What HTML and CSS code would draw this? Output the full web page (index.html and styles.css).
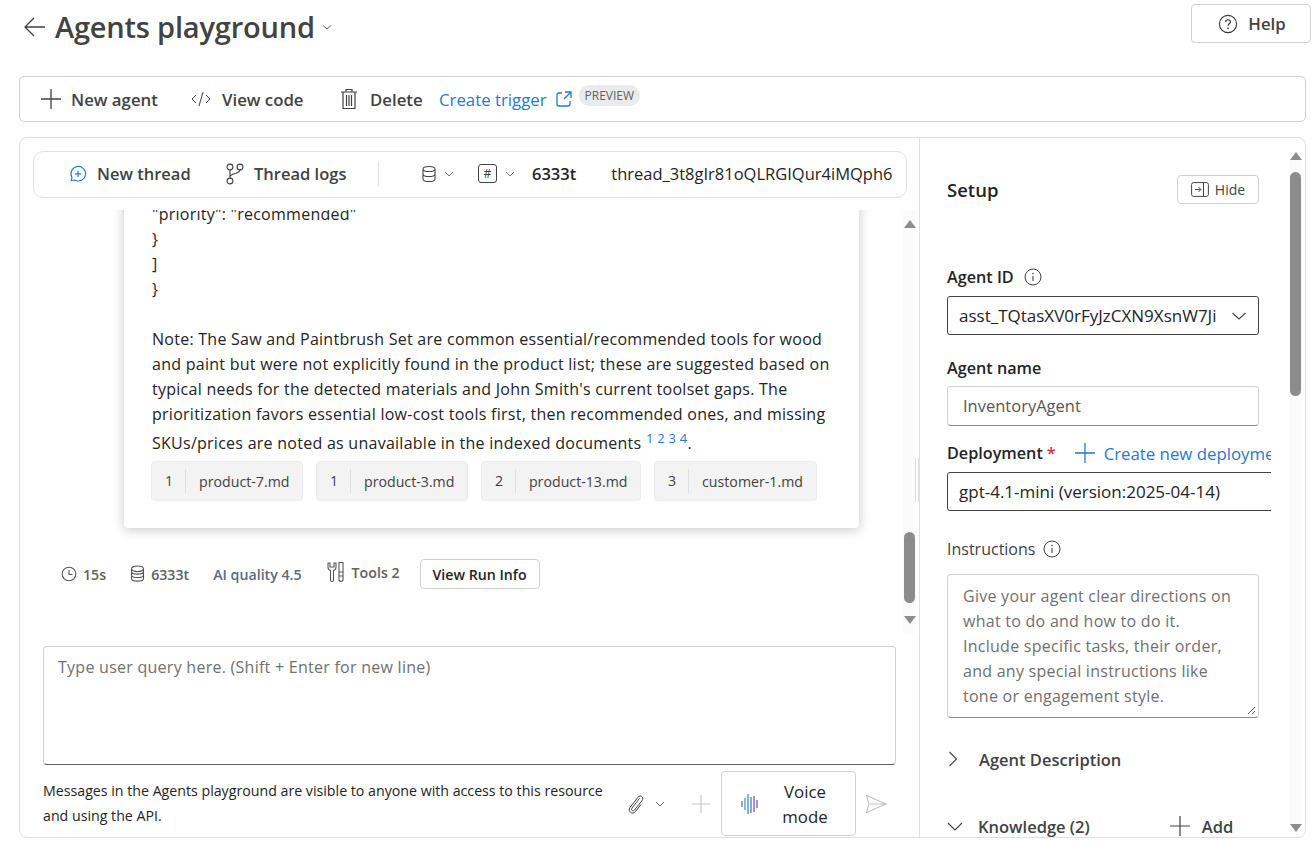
FILE: index.html
```html
<!DOCTYPE html>
<html lang="en">
<head>
    <meta charset="UTF-8">
    <meta name="viewport" content="width=device-width, initial-scale=1.0">
    <title>Agents playground</title>
    <link rel="stylesheet" href="styles.css">
</head>
<body>
    <!-- Page title -->
    <header class="page-head">
        <div class="title-group">
            <svg class="back-icon" width="24" height="24" viewBox="0 0 24 24"><path d="M12 3 L3 12 L12 21 M3 12 H23" fill="none" stroke="#424242" stroke-width="1.3"/></svg>
            <h1 class="page-title">Agents playground</h1>
            <svg class="title-chev" width="12" height="12" viewBox="0 0 12 12"><path d="M2 4.5 L6 8 L10 4.5" fill="none" stroke="#666" stroke-width="1"/></svg>
        </div>
        <button class="help-btn">
            <svg width="20" height="20" viewBox="0 0 20 20"><circle cx="10" cy="10" r="8.6" fill="none" stroke="#333" stroke-width="1.1"/><path d="M7.6 8 C7.6 4.9 12.4 4.9 12.4 8 C12.4 9.8 10 9.8 10 11.8" fill="none" stroke="#333" stroke-width="1.1"/><circle cx="10" cy="14.4" r=".8" fill="#333"/></svg>
            Help
        </button>
    </header>

    <!-- Toolbar -->
    <nav class="toolbar">
        <span class="tool tool-new">
            <svg width="22" height="22" viewBox="0 0 22 22"><path d="M11 1 V21 M1 11 H21" stroke="#424242" stroke-width="1.3"/></svg>
            New agent
        </span>
        <span class="tool tool-code">
            <svg width="20" height="16" viewBox="0 0 20 16"><path d="M5 4 L1 8 L5 12 M15 4 L19 8 L15 12 M12 1 L8 15" fill="none" stroke="#424242" stroke-width="1"/></svg>
            View code
        </span>
        <span class="tool tool-delete">
            <svg width="18" height="22" viewBox="0 0 18 22"><path d="M1 4 H17 M6 4 V1.5 H12 V4 M3 4 V20.5 H15 V4 M6.5 7 V18 M9 7 V18 M11.5 7 V18" fill="none" stroke="#424242" stroke-width="1.2"/></svg>
            Delete
        </span>
        <a class="trigger-link">Create trigger</a>
        <svg class="trigger-icon" width="16" height="16" viewBox="0 0 16 16"><path d="M6 2 H3 Q1 2 1 4 V13 Q1 15 3 15 H12 Q14 15 14 13 V10 M9 1 H15 V7 M15 1 L8 8" fill="none" stroke="#1f7ad1" stroke-width="1.3"/></svg>
        <span class="preview-tag">PREVIEW</span>
    </nav>

    <main class="workspace">
        <!-- Chat side -->
        <section class="chat-pane">
            <div class="thread-bar">
                <span class="thread-tool thread-new">
                    <svg width="18" height="18" viewBox="0 0 18 18"><path d="M2.2 15.6 L3 12.4 A7.3 7.3 0 1 1 5.6 15 Z" fill="none" stroke="#1f7ad1" stroke-width="1.1"/><path d="M9 5.8 V12 M5.9 8.9 H12.1" stroke="#1f7ad1" stroke-width="1.1"/></svg>
                    New thread
                </span>
                <span class="thread-tool thread-logs">
                    <svg width="20" height="22" viewBox="0 0 20 22"><circle cx="5" cy="4" r="2.9" fill="none" stroke="#424242" stroke-width="1.1"/><circle cx="15" cy="4" r="2.9" fill="none" stroke="#424242" stroke-width="1.1"/><circle cx="5" cy="18" r="2.9" fill="none" stroke="#424242" stroke-width="1.1"/><path d="M5 7 V15 M15 7 C15 11 5 10 5 14" fill="none" stroke="#424242" stroke-width="1.1"/></svg>
                    Thread logs
                </span>
                <span class="bar-divider"></span>
                <svg class="db-icon" width="14" height="18" viewBox="0 0 14 18"><path d="M1 4 C1 .6 13 .6 13 4 V14 C13 17.4 1 17.4 1 14 Z M1 4 C1 7.4 13 7.4 13 4 M1 9 C1 12.4 13 12.4 13 9" fill="none" stroke="#424242" stroke-width="1.1"/></svg>
                <svg class="bar-chev" width="10" height="10" viewBox="0 0 10 10"><path d="M1 3 L5 7 L9 3" fill="none" stroke="#777" stroke-width="1"/></svg>
                <span class="hash-box">#</span>
                <svg class="bar-chev" width="10" height="10" viewBox="0 0 10 10"><path d="M1 3 L5 7 L9 3" fill="none" stroke="#777" stroke-width="1"/></svg>
                <span class="token-count">6333t</span>
                <span class="thread-id">thread_3t8gIr81oQLRGIQur4iMQph6</span>
            </div>

            <div class="chat-body">
                <div class="chat-scroll">
                    <article class="answer-card">
                        <p class="answer-text">"priority": "recommended"<br>}<br>]<br>}<br><br>Note: The Saw and Paintbrush Set are common essential/recommended tools for wood<br>and paint but were not explicitly found in the product list; these are suggested based on<br>typical needs for the detected materials and John Smith's current toolset gaps. The<br>prioritization favors essential low-cost tools first, then recommended ones, and missing</p>
                        <p class="answer-last">SKUs/prices are noted as unavailable in the indexed documents <sup class="refs">1 2 3 4</sup>.</p>
                        <div class="chips">
                            <span class="chip"><b class="chip-num">1</b>product-7.md</span>
                            <span class="chip"><b class="chip-num">1</b>product-3.md</span>
                            <span class="chip"><b class="chip-num">2</b>product-13.md</span>
                            <span class="chip"><b class="chip-num">3</b>customer-1.md</span>
                        </div>
                    </article>
                    <div class="run-stats">
                        <span class="stat">
                            <svg width="16" height="16" viewBox="0 0 16 16"><circle cx="8" cy="8" r="6.8" fill="none" stroke="#555" stroke-width="1.1"/><path d="M8 4 V8.5 H11.5" fill="none" stroke="#555" stroke-width="1.1"/></svg>
                            15s
                        </span>
                        <span class="stat">
                            <svg width="15" height="18" viewBox="0 0 15 18"><ellipse cx="7.5" cy="3.8" rx="6" ry="2.8" fill="none" stroke="#555" stroke-width="1.1"/><path d="M1.5 4 V6.5 C1.5 10 13.5 10 13.5 6.5 V4 M1.5 7 V10 C1.5 13.4 13.5 13.4 13.5 10 V7 M1.5 10.5 V13.5 C1.5 17 13.5 17 13.5 13.5 V10.5" fill="none" stroke="#555" stroke-width="1.1"/></svg>
                            6333t
                        </span>
                        <span class="stat stat-quality">AI quality 4.5</span>
                        <span class="stat stat-tools">
                            <svg width="20" height="22" viewBox="0 0 20 22"><path d="M2 2 V6 C2 8 3 9 4.5 9.5 V19 C4.5 21 7.5 21 7.5 19 V9.5 C9 9 10 8 10 6 V2 L8 2 V6 H4 V2 Z" fill="none" stroke="#555" stroke-width="1.1"/><path d="M13 1.5 H17 V11 H13 Z M13 11 V18.5 C13 21 17 21 17 18.5 V11 M13 15 H17" fill="none" stroke="#555" stroke-width="1.1"/></svg>
                            Tools 2
                        </span>
                        <button class="run-info">View Run Info</button>
                    </div>
                </div>
                <div class="fake-scroll chat-track">
                    <span class="arrow-up"></span>
                    <span class="track-fill"><span class="thumb chat-thumb"></span></span>
                    <span class="arrow-down"></span>
                </div>
            </div>

            <div class="query-box">Type user query here. (Shift + Enter for new line)</div>

            <div class="chat-foot">
                <p class="foot-note">Messages in the Agents playground are visible to anyone with access to this resource<br>and using the API.</p>
                <svg class="clip-icon" width="18" height="22" viewBox="0 0 18 20"><path d="M12.5 4.5 L5 14 C3.6 16 6 18 7.6 16 L15 6.5 C17.4 3.4 13.4 .2 11 3.2 L3 13.5 C.4 17 5 21.500 8.500 17.500 L14 10.500" fill="none" stroke="#424242" stroke-width="1"/></svg>
                <svg class="clip-chev" width="10" height="10" viewBox="0 0 10 10"><path d="M1 3 L5 7 L9 3" fill="none" stroke="#666" stroke-width="1"/></svg>
                <svg class="foot-plus" width="20" height="20" viewBox="0 0 20 20"><path d="M10 1 V19 M1 10 H19" stroke="#c8c8c8" stroke-width="1.2"/></svg>
                <button class="voice-btn">
                    <svg width="18" height="26" viewBox="0 0 18 26"><path d="M1 10 V16" stroke="#5b7fd0" stroke-width="1.4"/><path d="M4 7 V19" stroke="#5b9fc0" stroke-width="1.4"/><path d="M7 3 V23" stroke="#3fa6a0" stroke-width="1.4"/><path d="M10 6 V22" stroke="#5b7fd0" stroke-width="1.4"/><path d="M13 5 V21" stroke="#7a62d8" stroke-width="1.4"/><path d="M16 9 V17" stroke="#8e5ad8" stroke-width="1.4"/></svg>
                    <span class="voice-label">Voice<br>mode</span>
                </button>
                <svg class="send-icon" width="22" height="20" viewBox="0 0 22 20"><path d="M1.5 1.5 L21 10 L1.5 18.5 L4 10 Z M4 10 H21" fill="none" stroke="#c4c4c4" stroke-width="1.1"/></svg>
            </div>
        </section>

        <div class="splitter"><span class="grip"></span></div>

        <!-- Setup side -->
        <aside class="setup-pane">
            <div class="setup-clip">
                <div class="setup-head">
                    <h2 class="setup-title">Setup</h2>
                    <button class="hide-btn">
                        <svg width="18" height="15" viewBox="0 0 18 15"><rect x=".6" y=".6" width="16.8" height="13.8" rx="2" fill="none" stroke="#424242"/><path d="M12.5 1 V14 M4 7.5 H9.5 M7.5 5 L10 7.5 L7.5 10" fill="none" stroke="#424242"/></svg>
                        Hide
                    </button>
                </div>

                <label class="field-label label-id">Agent ID
                    <svg width="18" height="18" viewBox="0 0 18 18"><circle cx="9" cy="9" r="8" fill="none" stroke="#424242" stroke-width="1"/><path d="M9 8 V13" stroke="#424242" stroke-width="1.1"/><circle cx="9" cy="5.6" r=".8" fill="#424242"/></svg>
                </label>
                <div class="select-box box-id">
                    <span>asst_TQtasXV0rFyJzCXN9XsnW7Ji</span>
                    <svg width="16" height="10" viewBox="0 0 16 10"><path d="M1.5 2 L8 8 L14.5 2" fill="none" stroke="#424242" stroke-width="1.1"/></svg>
                </div>

                <label class="field-label label-name">Agent name</label>
                <div class="text-box">InventoryAgent</div>

                <div class="deploy-row">
                    <label class="field-label">Deployment <span class="req">*</span></label>
                    <svg class="deploy-plus" width="20" height="20" viewBox="0 0 20 20"><path d="M10 0 V20 M0 10 H20" stroke="#1f7ad1" stroke-width="1.3"/></svg>
                    <a class="deploy-link">Create new deployment</a>
                </div>
                <div class="select-box box-deploy"><span>gpt-4.1-mini (version:2025-04-14)</span></div>

                <label class="instr-label">Instructions
                    <svg width="18" height="18" viewBox="0 0 18 18"><circle cx="9" cy="9" r="8" fill="none" stroke="#424242" stroke-width="1"/><path d="M9 8 V13" stroke="#424242" stroke-width="1.1"/><circle cx="9" cy="5.6" r=".8" fill="#424242"/></svg>
                </label>
                <div class="instr-box">Give your agent clear directions on<br>what to do and how to do it.<br>Include specific tasks, their order,<br>and any special instructions like<br>tone or engagement style.
                    <svg class="resize-mark" width="9" height="9" viewBox="0 0 9 9"><path d="M1 8 L8 1 M5 8 L8 5" stroke="#555" stroke-width="1"/></svg>
                </div>

                <div class="section-row row-desc">
                    <svg width="12" height="16" viewBox="0 0 12 16"><path d="M2.5 1 L9.5 8 L2.5 15" fill="none" stroke="#424242" stroke-width="1.1"/></svg>
                    Agent Description
                </div>
                <div class="section-row row-know">
                    <svg width="16" height="12" viewBox="0 0 16 12"><path d="M1 3 L8 10 L15 3" fill="none" stroke="#424242" stroke-width="1.1"/></svg>
                    Knowledge (2)
                    <span class="add-knowledge">
                        <svg width="22" height="22" viewBox="0 0 22 22"><path d="M11 1 V21 M1 11 H21" stroke="#424242" stroke-width="1.2"/></svg>
                        Add
                    </span>
                </div>
            </div>
            <div class="fake-scroll setup-track">
                <span class="arrow-up"></span>
                <span class="track-fill"><span class="thumb setup-thumb"></span></span>
                <span class="arrow-down"></span>
            </div>
        </aside>
    </main>
</body>
</html>
```

FILE: styles.css
```css
* {
    box-sizing: border-box;
}

body {
    font-family: 'Open Sans', 'Noto Sans', sans-serif;
    margin: 0;
    width: 1316px;
    height: 842px;
    overflow: hidden;
    background-color: #fff;
    color: #242424;
    font-size: 15px;
}

button {
    font-family: inherit;
    background-color: #fff;
    cursor: pointer;
}

/* Page title */
.page-head {
    display: flex;
    justify-content: space-between;
    height: 76px;
    padding: 4px 5px 0 22px;
}

.title-group {
    display: flex;
    align-items: center;
    height: 45px;
    gap: 9px;
}

.title-chev {
    margin-left: -3px;
}

.page-title {
    margin: 0;
    font-size: 29px;
    font-weight: 600;
    color: #424242;
    letter-spacing: -0.2px;
}

.help-btn {
    display: flex;
    align-items: center;
    justify-content: center;
    gap: 10px;
    width: 120px;
    height: 39px;
    padding: 0 0 0 2px;
    border: 1px solid #d1d1d1;
    border-radius: 4px;
    font-size: 16.8px;
    font-weight: 600;
    color: #424242;
}

/* Toolbar */
.toolbar {
    display: flex;
    align-items: center;
    height: 46px;
    margin: 0 10px 15px 19px;
    padding-left: 20px;
    border: 1px solid #d1d1d1;
    border-radius: 5px;
    font-size: 16.8px;
    font-weight: 600;
    color: #424242;
}

.tool {
    display: flex;
    align-items: center;
}

.tool-new {
    gap: 9px;
    width: 151px;
}

.tool-code {
    gap: 11px;
    width: 149px;
}

.tool-delete {
    gap: 12px;
    width: 99px;
}

.trigger-link {
    font-weight: 400;
    color: #1f7ad1;
}

.trigger-icon {
    margin-left: 9px;
}

.preview-tag {
    margin: -7px 0 0 7px;
    padding: 2px 6px;
    border-radius: 10px;
    background-color: #ebebeb;
    font-size: 12px;
    font-weight: 500;
    color: #616161;
}

/* Main area */
.workspace {
    display: flex;
    height: 701px;
    margin: 0 10px 0 19px;
    border: 1px solid #e0e0e0;
    border-radius: 8px;
}

.chat-pane {
    display: flex;
    flex-direction: column;
    width: 897px;
    padding-top: 13px;
}

.thread-bar {
    display: flex;
    align-items: center;
    flex-shrink: 0;
    width: 874px;
    height: 47px;
    margin-left: 13px;
    padding: 0 0 2px 35px;
    border: 1px solid #e0e0e0;
    border-radius: 10px;
    font-size: 16.5px;
    font-weight: 600;
    color: #424242;
}

.thread-tool {
    display: flex;
    align-items: center;
}

.thread-new {
    gap: 10px;
    width: 156px;
}

.thread-logs {
    gap: 9px;
    width: 153px;
}

.bar-divider {
    width: 1px;
    height: 25px;
    margin-right: 43px;
    background-color: #e0e0e0;
}

.bar-chev {
    margin-left: 8px;
}

.hash-box {
    display: flex;
    align-items: center;
    justify-content: center;
    width: 19px;
    height: 19px;
    margin-left: 24px;
    border: 1px solid #424242;
    border-radius: 3px;
    font-size: 12px;
    font-weight: 400;
}

.token-count {
    margin-left: 17px;
    color: #242424;
}

.thread-id {
    margin-left: 35px;
    font-weight: 400;
    color: #242424;
    white-space: nowrap;
}

.chat-body {
    display: flex;
    flex-shrink: 0;
    height: 424px;
    margin-top: 12px;
}

.chat-scroll {
    display: flex;
    flex-direction: column;
    justify-content: flex-end;
    width: 882px;
    overflow: hidden;
}

.answer-card {
    flex-shrink: 0;
    width: 735px;
    margin-left: 104px;
    padding: 20px 28px 27px;
    border-radius: 4px;
    background-color: #fff;
    box-shadow: 0 2px 12px rgba(0, 0, 0, 0.22);
}

.answer-text,
.answer-last {
    margin: 0;
    line-height: 25px;
    white-space: nowrap;
    font-size: 16px;
    letter-spacing: 0.26px;
}

.answer-last {
    margin-top: 4px;
}

.refs {
    font-size: 13px;
    line-height: 0;
    color: #1f7ad1;
}

.chips {
    display: flex;
    gap: 13px;
    margin: 5px 0 0 -1px;
}

.chip {
    display: flex;
    align-items: center;
    height: 40px;
    padding-right: 12.5px;
    border: 1px solid #ececec;
    border-radius: 4px;
    background-color: #f3f3f3;
    font-size: 14.2px;
    color: #424242;
}

.chip-num {
    display: block;
    width: 34px;
    padding-left: 13px;
    margin-right: 13px;
    border-right: 1px solid #e0e0e0;
    font-weight: 400;
    line-height: 24px;
}

.run-stats {
    display: flex;
    align-items: center;
    flex-shrink: 0;
    height: 30px;
    margin: 31px 0 45px 41px;
    font-size: 14.2px;
    font-weight: 600;
    color: #616161;
}

.stat {
    display: flex;
    align-items: center;
    gap: 6px;
    margin-right: 24px;
}

.stat-quality {
    color: #5a6b80;
}

.stat-tools {
    margin: 0 20px 4px 0;
}

.run-info {
    width: 120px;
    height: 30px;
    padding: 0;
    border: 1px solid #d1d1d1;
    border-radius: 4px;
    font-size: 14.2px;
    font-weight: 600;
    color: #242424;
}

/* Scrollbars drawn by hand */
.fake-scroll {
    display: flex;
    flex-direction: column;
    align-items: center;
    width: 13px;
    background-color: #fbfbfb;
}

.chat-track {
    margin-left: 1px;
    padding: 10px 0 10px;
}

.setup-track {
    flex-shrink: 0;
    margin: 14px 4px 0 0;
    height: 680px;
}

.track-fill {
    display: flex;
    flex-direction: column;
    flex: 1;
    justify-content: flex-end;
    align-items: center;
    width: 100%;
    padding: 0 0 13px;
}

.setup-track .track-fill {
    justify-content: flex-start;
    padding: 12px 0 0;
}

.thumb {
    display: block;
    width: 11px;
    border-radius: 6px;
    background-color: #8c8c8c;
}

.chat-thumb {
    height: 71px;
}

.setup-thumb {
    height: 224px;
}

.arrow-up {
    width: 0;
    height: 0;
    border-left: 6px solid transparent;
    border-right: 6px solid transparent;
    border-bottom: 8px solid #8c8c8c;
}

.arrow-down {
    width: 0;
    height: 0;
    border-left: 6px solid transparent;
    border-right: 6px solid transparent;
    border-top: 8px solid #8c8c8c;
}

/* Query box and footer */
.query-box {
    flex-shrink: 0;
    width: 853px;
    height: 119px;
    margin: 12px 0 0 23px;
    padding: 9px 14px;
    border: 1px solid #d1d1d1;
    border-bottom-color: #616161;
    border-radius: 4px;
    font-size: 16px;
    letter-spacing: 0.26px;
    color: #707070;
}

.chat-foot {
    display: flex;
    align-items: center;
    width: 853px;
    height: 65px;
    margin: 6px 0 0 23px;
}

.foot-note {
    width: 583px;
    margin: -1px 0 0;
    font-size: 14.2px;
    line-height: 25px;
    white-space: nowrap;
    color: #242424;
}

.clip-icon {
    margin-left: 1px;
}

.clip-chev {
    margin-left: 10px;
}

.foot-plus {
    margin-left: 26px;
}

.voice-btn {
    display: flex;
    align-items: center;
    width: 135px;
    height: 65px;
    margin-left: 10px;
    padding: 0 0 0 19px;
    border: 1px solid #d1d1d1;
    border-radius: 4px;
    font-size: 16.8px;
    font-weight: 400;
    color: #242424;
}

.voice-label {
    width: 92px;
    line-height: 25px;
    text-align: center;
}

.send-icon {
    margin-left: 9px;
}

.splitter {
    position: relative;
    width: 1px;
    background-color: #e0e0e0;
    margin-left: 2px;
}

.grip {
    position: absolute;
    top: 320px;
    left: -4px;
    width: 4px;
    height: 44px;
    border-left: 1px solid #e0e0e0;
    border-right: 1px solid #e0e0e0;
}

/* Setup side */
.setup-pane {
    display: flex;
    flex: 1;
    min-width: 0;
}

.setup-clip {
    width: 351px;
    flex-shrink: 0;
    overflow: hidden;
    padding-left: 27px;
    margin-right: 18px;
}

.setup-head {
    display: flex;
    align-items: center;
    justify-content: space-between;
    width: 312px;
    height: 30px;
    margin-top: 36px;
}

.setup-title {
    margin: 0;
    font-size: 18.5px;
    font-weight: 600;
}

.hide-btn {
    display: flex;
    align-items: center;
    justify-content: center;
    gap: 6px;
    width: 82px;
    height: 29px;
    padding: 0;
    border: 1px solid #d1d1d1;
    border-radius: 4px;
    font-size: 14px;
    color: #424242;
}

.field-label {
    display: flex;
    align-items: center;
    gap: 10px;
    font-size: 16.2px;
    font-weight: 600;
    line-height: 24px;
}

.label-id {
    margin-top: 61px;
    margin-bottom: 7px;
}

.label-name {
    margin: 21px 0 6px;
}

.select-box {
    display: flex;
    align-items: center;
    justify-content: space-between;
    height: 39px;
    padding: 0 11px;
    border: 1px solid #424242;
    border-radius: 3px;
    font-size: 17px;
    white-space: nowrap;
}

.box-id {
    width: 312px;
}

.box-deploy {
    width: 340px;
}

.text-box {
    width: 312px;
    height: 40px;
    padding: 7px 15px;
    border: 1px solid #d1d1d1;
    border-bottom-color: #8a8a8a;
    border-radius: 4px;
    font-size: 16.5px;
    color: #555;
}

.deploy-row {
    display: flex;
    align-items: center;
    margin: 15px 0 7px;
    height: 24px;
    white-space: nowrap;
}

.deploy-row .field-label {
    margin-right: 19px;
}

.deploy-plus {
    flex-shrink: 0;
}

.deploy-link {
    flex-shrink: 0;
    margin-left: 9px;
    font-size: 16.8px;
    color: #1f7ad1;
}

.req {
    margin-left: -6px;
    color: #d13438;
}

.instr-label {
    display: flex;
    align-items: center;
    gap: 8px;
    margin: 26px 0 13px;
    font-size: 16px;
    line-height: 24px;
    color: #424242;
}

.instr-box {
    position: relative;
    width: 312px;
    height: 144px;
    padding: 9px 15px;
    border: 1px solid #d1d1d1;
    border-bottom-color: #8a8a8a;
    border-radius: 4px;
    font-size: 16px;
    letter-spacing: 0.26px;
    line-height: 25px;
    color: #707070;
}

.resize-mark {
    position: absolute;
    right: 2px;
    bottom: 2px;
}

.section-row {
    display: flex;
    align-items: center;
    gap: 20px;
    height: 24px;
    font-size: 16.5px;
    font-weight: 600;
    color: #424242;
    white-space: nowrap;
}

.row-desc {
    margin-top: 29px;
}

.row-know {
    margin-top: 43px;
    gap: 15px;
}

.add-knowledge {
    display: flex;
    align-items: center;
    gap: 11px;
    margin-left: 64px;
}
```
